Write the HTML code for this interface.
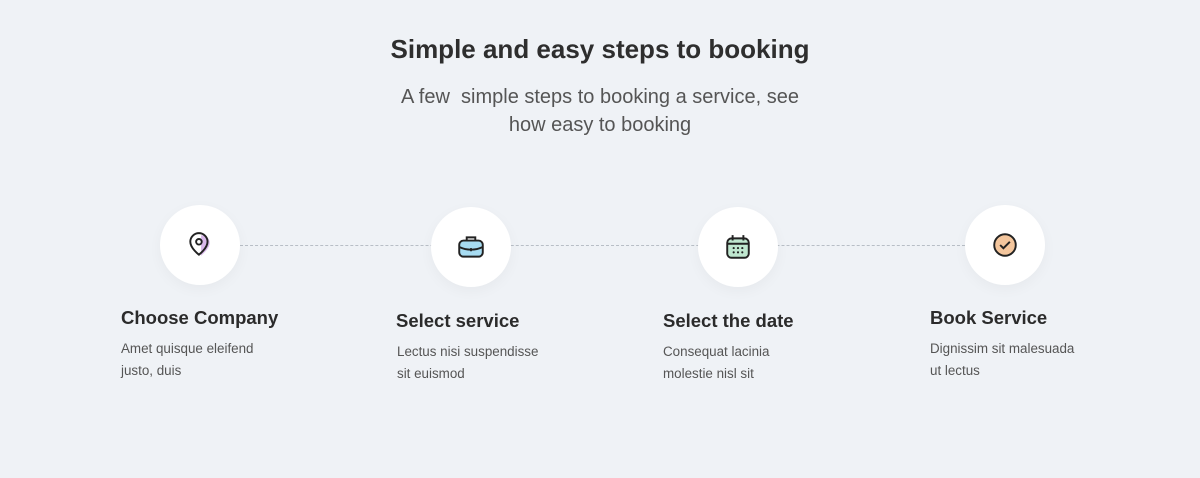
<!DOCTYPE html><html><head><style>
body{margin:0;width:1200px;height:478px;background:#eff2f6;font-family:"Liberation Sans",sans-serif;position:relative;overflow:hidden;color:#2b2b2b}
h1{position:absolute;top:34px;left:0;width:1200px;text-align:center;margin:0;font-size:26px;font-weight:700;color:#2e2e2e}
.sub{position:absolute;top:83px;left:0;width:1200px;text-align:center;font-size:20px;line-height:28px;color:#555}
.line{position:absolute;top:245px;left:240px;width:730px;border-top:1.5px dashed #b8bec6}
.c{position:absolute;width:80px;height:80px;border-radius:50%;background:#fff;box-shadow:0 4px 14px rgba(0,0,0,.04);display:flex;align-items:center;justify-content:center}
.t{position:absolute;font-size:18.5px;font-weight:700;color:#2b2b2b;margin:0}
.d{position:absolute;font-size:13.4px;line-height:22px;color:#555}
</style></head><body>
<h1>Simple and easy steps to booking</h1>
<div class="sub">A few &nbsp;simple steps to booking a service, see<br>how easy to booking</div>
<div class="line"></div>
<div class="c" style="left:160px;top:205px"><svg width="28" height="28" viewBox="0 0 26 26"><path d="M14 4c5 0 8 3 8 7 0 5-6 10-8 12z" fill="#d9b8ea"/><path d="M12 22s-8-6-8-12a8 8 0 0 1 16 0c0 6-8 12-8 12z" fill="none" stroke="#222" stroke-width="1.8"/><circle cx="12" cy="10" r="2.6" fill="none" stroke="#222" stroke-width="1.8"/></svg></div>
<div class="c" style="left:431px;top:207px"><svg width="30" height="28" viewBox="0 0 28 26"><rect x="3" y="7" width="22" height="15" rx="4" fill="#a7dcf2" stroke="#222" stroke-width="1.8"/><path d="M10 7V4h8v3M3 13q11 5 22 0M14 14v3" fill="none" stroke="#222" stroke-width="1.8"/></svg></div>
<div class="c" style="left:698px;top:207px"><svg width="28" height="28" viewBox="0 0 26 26"><rect x="3" y="5" width="20" height="18" rx="4" fill="#bfe7cf" stroke="#222" stroke-width="1.8"/><path d="M8 2v5M18 2v5M3 10h20" stroke="#222" stroke-width="1.8"/><g fill="#222"><circle cx="9" cy="14" r="1"/><circle cx="13" cy="14" r="1"/><circle cx="17" cy="14" r="1"/><circle cx="9" cy="18" r="1"/><circle cx="13" cy="18" r="1"/><circle cx="17" cy="18" r="1"/></g></svg></div>
<div class="c" style="left:965px;top:205px"><svg width="28" height="28" viewBox="0 0 26 26"><circle cx="13" cy="13" r="10" fill="#f4c69d" stroke="#222" stroke-width="1.8"/><path d="M8.5 13l3 3 6-6" fill="none" stroke="#222" stroke-width="1.8"/></svg></div>
<div class="t" style="left:121px;top:307px">Choose Company</div>
<div class="d" style="left:121px;top:338px">Amet quisque eleifend<br>justo, duis</div>
<div class="t" style="left:396px;top:310px">Select service</div>
<div class="d" style="left:397px;top:341px">Lectus nisi suspendisse<br>sit euismod</div>
<div class="t" style="left:663px;top:310px">Select the date</div>
<div class="d" style="left:663px;top:341px">Consequat lacinia<br>molestie nisl sit</div>
<div class="t" style="left:930px;top:307px">Book Service</div>
<div class="d" style="left:930px;top:338px">Dignissim sit malesuada<br>ut lectus</div>
</body></html>
